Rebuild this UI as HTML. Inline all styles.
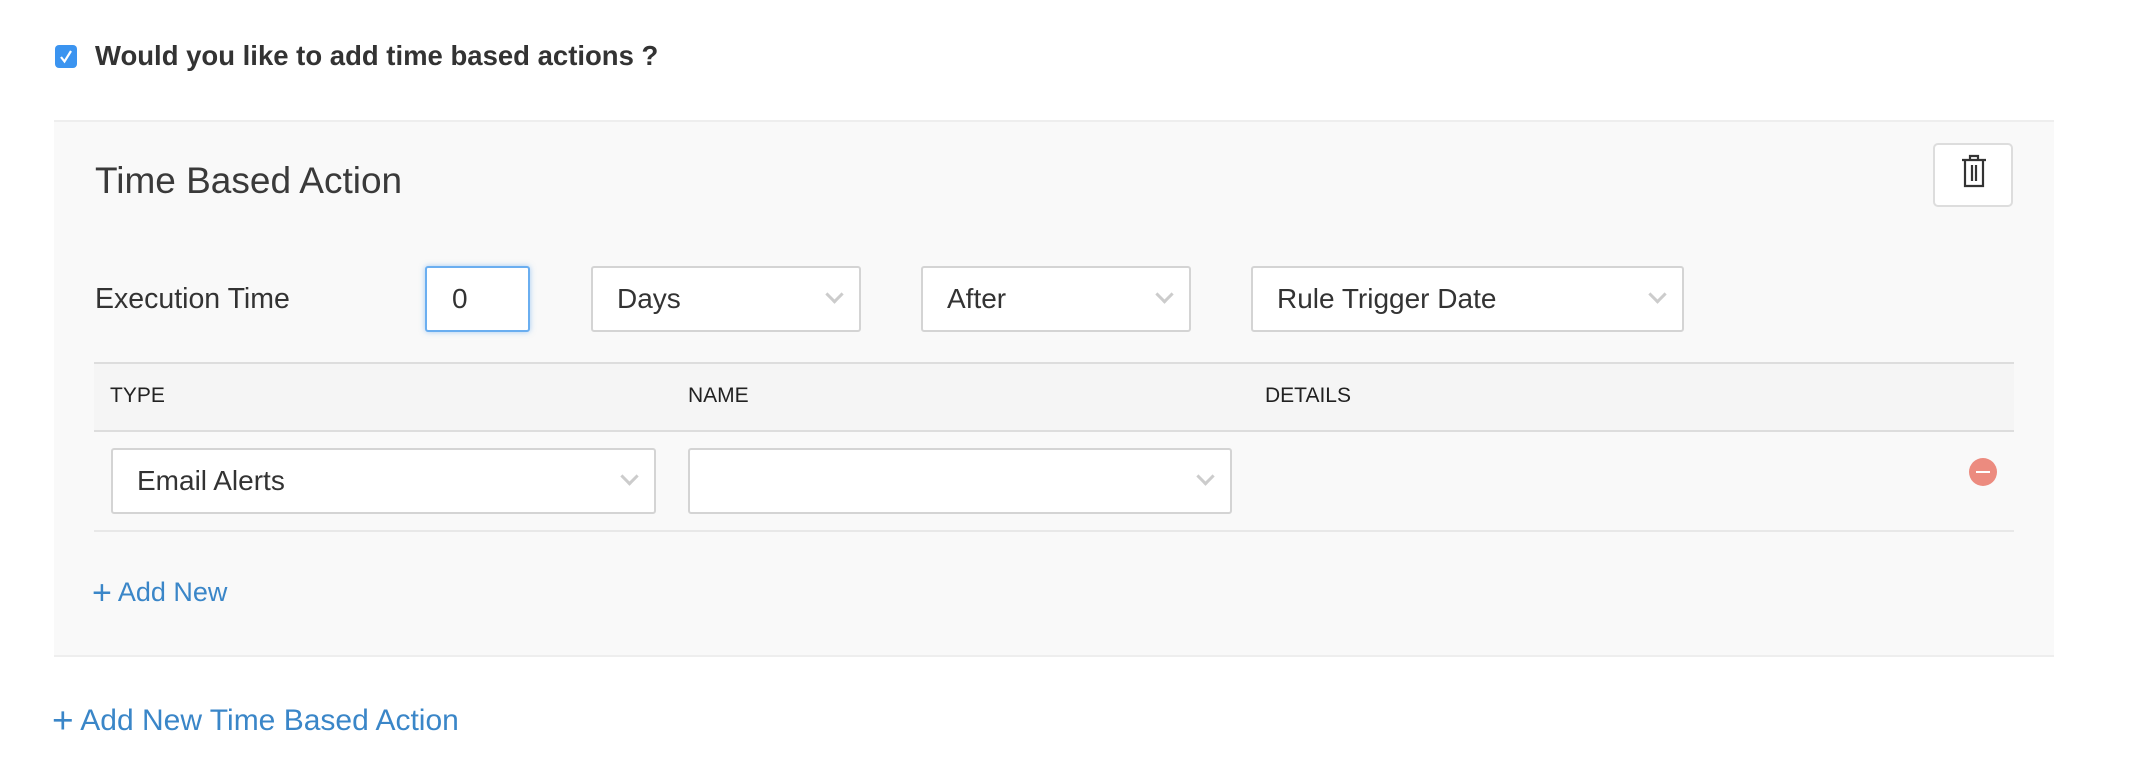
<!DOCTYPE html>
<html><head><meta charset="utf-8"><style>
*{box-sizing:border-box;margin:0;padding:0}
body{width:2156px;height:770px;background:#fff;font-family:"Liberation Sans",sans-serif;color:#333;position:relative;overflow:hidden}
.a{position:absolute}
.cb{left:55px;top:45px;width:22px;height:23px;background:#3b94f0;border-radius:4px}
.sel{position:absolute;background:#fff;border:2px solid #d4d4d4;border-radius:3px;font-size:28px;color:#333;padding-left:24px;line-height:61px}
.chev{position:absolute;right:18px;top:20px;width:13px;height:13px;border-right:3px solid #ccc;border-bottom:3px solid #ccc;transform:rotate(45deg)}
.lnk{color:#3a86c8}
</style></head><body>
<div class="a cb"><svg width="22" height="23" viewBox="0 0 22 23"><path d="M6 12 L9.5 16.5 L16 6" stroke="#fff" stroke-width="2.2" fill="none"/></svg></div>
<div class="a" style="left:95px;top:40px;font-size:27.5px;font-weight:bold;color:#333">Would you like to add time based actions ?</div>
<div class="a" style="left:54px;top:120px;width:2000px;height:537px;background:#f9f9f9;border-top:2px solid #eee;border-bottom:2px solid #eee"></div>
<div class="a" style="left:95px;top:160px;font-size:37px;color:#3a3a3a">Time Based Action</div>
<div class="a" style="left:1933px;top:143px;width:80px;height:64px;background:#fff;border:2px solid #ddd;border-radius:5px">
<svg class="a" style="left:24px;top:8px" width="30" height="36" viewBox="0 0 30 36"><path d="M3 7H27M11 7V3H19V7M6 7V33H24V7M13 12V28M17 12V28" stroke="#333" stroke-width="2.2" fill="none"/></svg></div>
<div class="a" style="left:95px;top:283px;font-size:28.5px">Execution Time</div>
<div class="a" style="left:425px;top:266px;width:105px;height:66px;background:#fff;border:2px solid #6aaef0;border-radius:3px;box-shadow:0 0 6px rgba(80,160,240,.5);font-size:28px;line-height:62px;padding-left:25px">0</div>
<div class="sel" style="left:591px;top:266px;width:270px;height:66px">Days<div class="chev"></div></div>
<div class="sel" style="left:921px;top:266px;width:270px;height:66px">After<div class="chev"></div></div>
<div class="sel" style="left:1251px;top:266px;width:433px;height:66px">Rule Trigger Date<div class="chev"></div></div>
<div class="a" style="left:94px;top:362px;width:1920px;height:70px;background:#f5f5f5;border-top:2px solid #ddd;border-bottom:2px solid #ddd"></div>
<div class="a" style="left:110px;top:384px;font-size:21px;color:#222">TYPE</div>
<div class="a" style="left:688px;top:384px;font-size:21px;color:#222">NAME</div>
<div class="a" style="left:1265px;top:384px;font-size:21px;color:#222">DETAILS</div>
<div class="sel" style="left:111px;top:448px;width:545px;height:66px">Email Alerts<div class="chev"></div></div>
<div class="sel" style="left:688px;top:448px;width:544px;height:66px"><div class="chev"></div></div>
<div class="a" style="left:1969px;top:458px;width:28px;height:28px;border-radius:50%;background:#ec8b7f"><div class="a" style="left:7px;top:13px;width:14px;height:2px;background:#fff"></div></div>
<div class="a" style="left:94px;top:530px;width:1920px;height:2px;background:#e8e8e8"></div>
<div class="a lnk" style="left:92px;top:574px;font-size:27px"><span style="font-size:34px;vertical-align:-3px">+</span> Add New</div>
<div class="a lnk" style="left:52px;top:700px;font-size:30px"><span style="font-size:37px;vertical-align:-3px">+</span> Add New Time Based Action</div>
</body></html>
